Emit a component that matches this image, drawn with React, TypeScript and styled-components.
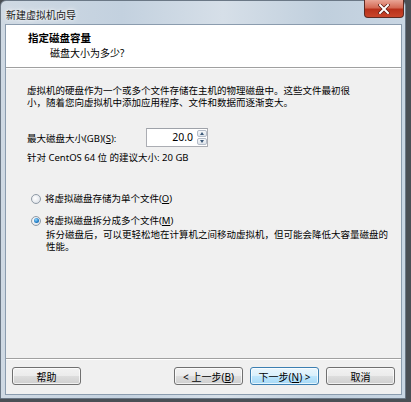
import React from 'react';
import styled, { createGlobalStyle } from 'styled-components';

const GlobalStyle = createGlobalStyle`
  html, body {
    margin: 0;
    padding: 0;
    background: #4a4f55;
  }
  body {
    font-family: "Noto Sans", "Noto Sans CJK SC", sans-serif;
    font-size: 9.5px;
    color: #000;
  }
`;

const Screen = styled.div`
  width: 411px;
  height: 402px;
  overflow: hidden;
`;

const Window = styled.div`
  width: 406px;
  height: 399px;
  box-sizing: border-box;
  border: 1px solid #6b7886;
  border-radius: 6px 6px 0 0;
  background: linear-gradient(90deg, #cfd9e3 0%, #c3d1df 30%, #d6dfe8 55%, #c0cfdd 80%, #c9d6e3 100%);
  display: flex;
  flex-direction: column;
`;

const TitleBar = styled.div`
  height: 23px;
  display: flex;
  align-items: flex-start;
  justify-content: space-between;
  padding-left: 5px;
`;

const Title = styled.span`
  margin-top: 6px;
  font-size: 10px;
  color: #1a1a1a;
  text-shadow: 0 0 6px #fff, 0 0 3px #fff;
`;

const CloseButton = styled.div`
  width: 40px;
  height: 18px;
  margin-right: 1px;
  margin-top: -1px;
  box-sizing: border-box;
  border: 1px solid #5d2a22;
  border-top: none;
  border-radius: 0 0 4px 4px;
  background: linear-gradient(180deg, #e9a596 0%, #d46a55 45%, #b8311b 55%, #c9462b 100%);
  display: flex;
  align-items: center;
  justify-content: center;
`;

const Client = styled.div`
  flex: 1;
  margin: 0 3px 3px 4px;
  border: 1px solid #8b9cae;
  background: #f0f0f0;
  display: flex;
  flex-direction: column;
`;

const Header = styled.div`
  height: 43px;
  background: #fff;
  border-bottom: 1px solid #a0a0a0;
  box-shadow: 0 1px 0 #fff;
  padding: 6px 0 0 22px;
  box-sizing: border-box;
`;

const HeaderTitle = styled.div`
  font-weight: bold;
  font-size: 10.5px;
  line-height: 14px;
`;

const HeaderSub = styled.div`
  margin-left: 22px;
  font-size: 10px;
  line-height: 16px;
`;

const Body = styled.div`
  flex: 1;
  padding: 17px 0 0 21px;
`;

const Paragraph = styled.p`
  margin: 0;
  line-height: 11.5px;
  width: 330px;
`;

const SizeRow = styled.div`
  margin-top: 20px;
  display: flex;
  align-items: center;
  height: 19px;
`;

const Label = styled.span`
  width: 119px;
`;

const SpinBox = styled.div`
  display: flex;
  height: 19px;
  width: 62px;
  box-sizing: border-box;
  border: 1px solid #abadb3;
  border-top-color: #9ea2a9;
  background: #fff;
`;

const SpinInput = styled.div`
  flex: 1;
  text-align: right;
  padding-right: 4px;
  line-height: 17px;
  font-size: 10.5px;
`;

const SpinButtons = styled.div`
  width: 10px;
  display: flex;
  flex-direction: column;
  gap: 1px;
  padding: 1px 0;
`;

const SpinArrow = styled.div<{ $up?: boolean }>`
  flex: 1;
  border: 1px solid #b4bcc8;
  border-radius: 2px;
  background: linear-gradient(180deg, #f6f8fa, #dde3ea);
  display: flex;
  align-items: center;
  justify-content: center;
  &::after {
    content: '';
    border-left: 2.5px solid transparent;
    border-right: 2.5px solid transparent;
    ${p => p.$up ? 'border-bottom: 3px solid #3b5878;' : 'border-top: 3px solid #3b5878;'}
  }
`;

const Hint = styled.div`
  margin-top: 4px;
  line-height: 14px;
`;

const Options = styled.div`
  margin-top: 27px;
  display: flex;
  flex-direction: column;
  gap: 9px;
`;

const Option = styled.label`
  display: flex;
  align-items: center;
  gap: 4px;
  line-height: 13px;
`;

const Radio = styled.span<{ $checked?: boolean }>`
  width: 10px;
  height: 10px;
  box-sizing: border-box;
  margin-left: 4px;
  border-radius: 50%;
  border: 1px solid #8f9aa6;
  background: radial-gradient(circle at 40% 40%, #ffffff 0%, #e6e9ee 60%, #cfd4da 100%);
  display: flex;
  align-items: center;
  justify-content: center;
  &::after {
    content: '';
    display: ${p => (p.$checked ? 'block' : 'none')};
    width: 5px;
    height: 5px;
    border-radius: 50%;
    background: radial-gradient(circle at 40% 35%, #8fd6ff 0%, #1e7bc4 60%, #0e4f8a 100%);
  }
`;

const OptionNote = styled.p`
  margin: 2px 0 0 19px;
  line-height: 12px;
  width: 343px;
`;

const Key = styled.u``;

const Footer = styled.div`
  height: 34px;
  border-top: 1px solid #a0a0a0;
  box-shadow: inset 0 1px 0 #fff;
  display: flex;
  align-items: center;
  padding: 0 6px 1px 6px;
  gap: 7px;
`;

const Spacer = styled.div`
  flex: 1;
`;

const Button = styled.button<{ $default?: boolean }>`
  width: 69px;
  height: 18px;
  padding: 0;
  font-family: inherit;
  font-size: 10px;
  color: #000;
  border-radius: 3px;
  border: 1px solid ${p => (p.$default ? '#3c7fb1' : '#707070')};
  background: ${p =>
    p.$default
      ? 'linear-gradient(180deg, #eaf6fd 0%, #d9f0fc 50%, #bee6fd 51%, #a7d9f5 100%)'
      : 'linear-gradient(180deg, #f2f2f2 0%, #ebebeb 50%, #dddddd 51%, #cfcfcf 100%)'};
  box-shadow: inset 0 0 0 1px rgba(255, 255, 255, 0.7);
`;

const App = () => {
  return <Screen>
    <GlobalStyle />
    <Window>
      <TitleBar>
        <Title>新建虚拟机向导</Title>
        <CloseButton>
          <svg width="12" height="10" viewBox="0 0 12 10">
            <path d="M2 1 L10 9 M10 1 L2 9" stroke="#5a1a10" strokeWidth="3.4" strokeLinecap="square" />
            <path d="M2 1 L10 9 M10 1 L2 9" stroke="#fff" strokeWidth="2" strokeLinecap="square" />
          </svg>
        </CloseButton>
      </TitleBar>
      <Client>
        <Header>
          <HeaderTitle>指定磁盘容量</HeaderTitle>
          <HeaderSub>磁盘大小为多少?</HeaderSub>
        </Header>
        <Body>
          <Paragraph>
            虚拟机的硬盘作为一个或多个文件存储在主机的物理磁盘中。这些文件最初很小，随着您向虚拟机中添加应用程序、文件和数据而逐渐变大。
          </Paragraph>
          <SizeRow>
            <Label>最大磁盘大小(GB)(<Key>S</Key>):</Label>
            <SpinBox>
              <SpinInput>20.0</SpinInput>
              <SpinButtons>
                <SpinArrow $up />
                <SpinArrow />
              </SpinButtons>
            </SpinBox>
          </SizeRow>
          <Hint>针对 CentOS 64 位 的建议大小: 20 GB</Hint>
          <Options>
            <Option>
              <Radio />
              <span>将虚拟磁盘存储为单个文件(<Key>O</Key>)</span>
            </Option>
            <div>
              <Option>
                <Radio $checked />
                <span>将虚拟磁盘拆分成多个文件(<Key>M</Key>)</span>
              </Option>
              <OptionNote>
                拆分磁盘后，可以更轻松地在计算机之间移动虚拟机，但可能会降低大容量磁盘的性能。
              </OptionNote>
            </div>
          </Options>
        </Body>
        <Footer>
          <Button>帮助</Button>
          <Spacer />
          <Button>&lt; 上一步(<Key>B</Key>)</Button>
          <Button $default>下一步(<Key>N</Key>) &gt;</Button>
          <Button>取消</Button>
        </Footer>
      </Client>
    </Window>
  </Screen>;
};

export default App;
